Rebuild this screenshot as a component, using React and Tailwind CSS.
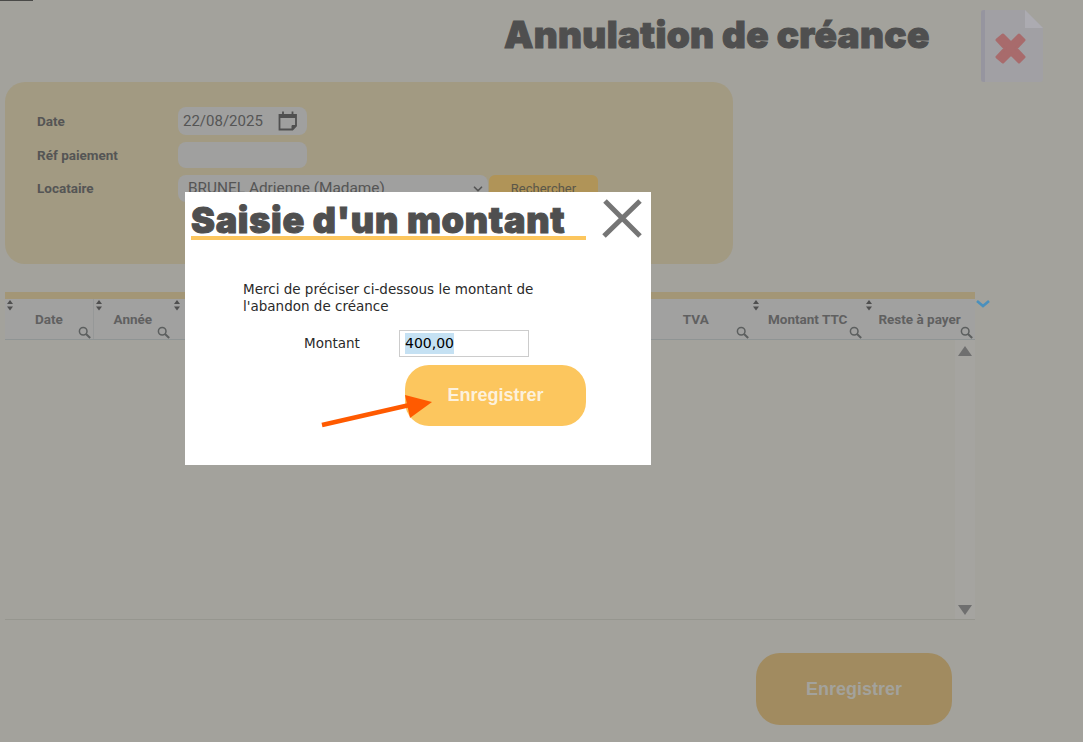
import { ChevronDown } from 'lucide-react';

const SortIcon = ({ className }) => (
  <svg viewBox="0 0 8 11" className={`absolute w-2 h-[11px] ${className}`}>
    <path d="M4 0 7 4H1zM4 10.5 1 6.5h6z" fill="#4f4f4f" />
  </svg>
);

const SearchIcon = ({ className }) => (
  <svg viewBox="0 0 13 13" className={`absolute w-[13px] h-[13px] ${className}`} fill="none" stroke="#5c5f5f">
    <circle cx="5.200" cy="5.200" r="3.800" strokeWidth="1.500" />
    <path d="M8 8 12.200 12" strokeWidth="2" />
  </svg>
);

const CalendarIcon = () => (
  <svg viewBox="0 0 20 20" className="w-5 h-5 ml-[15px]" fill="none" stroke="#505050">
    <path d="M1.500 4h16.500v11l-3.500 3.500H1.500z" strokeWidth="1.800" />
    <path d="M1.500 5.500h16.500" strokeWidth="3" />
    <path d="M5 .5v4M14.500 .5v4" strokeWidth="1.800" />
    <path d="M18 14.500h-4v4z" fill="#505050" strokeWidth="1" />
  </svg>
);

const FileCloseIcon = () => (
  <svg viewBox="0 0 62 72" className="w-[62px] h-[72px]">
    <path d="M3 0h41l18 18v51a3 3 0 0 1-3 3H3a3 3 0 0 1-3-3V3a3 3 0 0 1 3-3z" fill="#a1a0a4" />
    <path d="M3 0h1v72H3a3 3 0 0 1-3-3V3a3 3 0 0 1 3-3z" fill="#96959f" />
    <path d="M44 0l18 18H44z" fill="#acabb1" />
    <path d="M22 25l8 8 8-8 5 5-8 8.500 8 8.500-5 5-8-8-8 8-6-5 8-8.500-8-8.500z" fill="#a86b6c" stroke="#a86b6c" strokeWidth="3" strokeLinejoin="round" />
  </svg>
);

const columns = [
  { label: 'Date', width: 'w-[89px]', sort: true, border: true },
  { label: 'Année', width: 'w-[78px]', sort: true },
  { label: '', width: 'w-[469px]', sort: true },
  { label: 'TVA', width: 'w-[111px]' },
  { label: 'Montant TTC', width: 'w-[113px]', sort: true },
  { label: 'Reste à payer', width: 'w-[111px]', sort: true },
];

const roboto = "font-['Roboto',sans-serif]";

export default function App() {
  return (
    <div className="relative w-[1083px] h-[742px] overflow-hidden bg-[#a3a29c] flex flex-col">
      <div className="w-[33px] h-px shrink-0 bg-[#4a4a48]" />

      <header className="h-[81px] shrink-0 flex items-start">
        <h1 className="ml-[504px] mt-[12px] w-[430px] font-['Inter',sans-serif] font-black text-[37px] leading-[44px] tracking-[0.3px] [-webkit-text-stroke:1px_#4f4f4f] text-[#4f4f4f] whitespace-nowrap">
          Annulation de créance
        </h1>
        <div className="ml-[47px] mt-[9px]">
          <FileCloseIcon />
        </div>
      </header>

      <section className={`ml-[5px] w-[728px] h-[182px] shrink-0 rounded-[20px] bg-[#a29a82] pl-[32px] pt-[25px] flex flex-col gap-[7px] ${roboto} text-[#555555]`}>
        <div className="flex items-center h-[28px]">
          <label className="w-[141px] text-[13.500px] font-bold">Date</label>
          <div className="w-[129px] h-[28px] rounded-lg bg-[#a0a09f] pl-[5px] flex items-center text-[15px]">
            22/08/2025
            <CalendarIcon />
          </div>
        </div>
        <div className="flex items-center h-[26px]">
          <label className="w-[141px] text-[13.500px] font-bold">Réf paiement</label>
          <div className="w-[129px] h-[26px] rounded-lg bg-[#a0a09f]" />
        </div>
        <div className="flex items-center h-[27px]">
          <label className="w-[141px] text-[13.500px] font-bold">Locataire</label>
          <div className="w-[310px] h-[27px] rounded-lg bg-[#a0a09f] pl-[10px] pr-[3px] flex items-center justify-between text-[15.400px]">
            BRUNEL Adrienne (Madame)
            <ChevronDown size={14} strokeWidth={3} />
          </div>
          <button className="ml-px w-[109px] h-[27px] rounded-md bg-[#b09458] text-[13px] text-[#5b5749]">Rechercher</button>
        </div>
      </section>

      <section className={`relative mt-[28px] ml-[5px] w-[970px] shrink-0 ${roboto}`}>
        <div className="h-[7px] bg-[#a39676]" />
        <div className="flex h-[41px] border-b border-[#8f9494] bg-[#a1a1a0]">
          {columns.map((col, i) => (
            <div key={i} className={`relative ${col.width} flex items-center justify-center text-[13.500px] font-bold text-[#606060] ${col.border ? 'border-r border-[#969898]' : ''}`}>
              {col.sort && <SortIcon className="left-px top-px" />}
              <span className="whitespace-nowrap">{col.label}</span>
              <SearchIcon className="right-[2px] bottom-0" />
            </div>
          ))}
        </div>
        <div className="h-[280px] border-b border-[#96968f] flex justify-end">
          <div className="w-[20px] h-full bg-[#a5a4a0] flex flex-col items-center justify-between pt-[6px] pb-[4px]">
            <svg viewBox="0 0 14 10" className="w-[14px] h-[10px]"><path d="M7 0 14 10H0z" fill="#6f6f6f" /></svg>
            <svg viewBox="0 0 14 10" className="w-[14px] h-[10px]"><path d="M0 0H14L7 10z" fill="#6f6f6f" /></svg>
          </div>
        </div>
        <svg viewBox="0 0 14 8" className="absolute -right-[15px] top-[8px] w-[14px] h-2" fill="none" stroke="#4a90bd" strokeWidth="2.600">
          <path d="M1 1l6 5 6-5" />
        </svg>
      </section>

      <div className="mt-[33px] ml-[756px] w-[196px] h-[72px] shrink-0 rounded-[24px] bg-[#a18b60] flex items-center justify-center font-['Liberation_Sans',sans-serif] font-bold text-[18px] text-[#a3a29c]">
        Enregistrer
      </div>

      {/* modal over the dimmed page */}
      <div className="absolute left-[185px] top-[192px] w-[466px] h-[273px] bg-white">
        <div className="flex items-start pl-[6px]">
          <h2 className="w-[395px] h-[48px] border-b-4 border-[#fcc65e] font-['Inter',sans-serif] font-black text-[36px] leading-[56px] tracking-[0.7px] [-webkit-text-stroke:1px_#4f4f4f] text-[#4f4f4f] whitespace-nowrap">
            Saisie d'un montant
          </h2>
          <svg viewBox="0 0 40 40" className="w-10 h-10 ml-[16px] mt-[7px]" stroke="#757575" strokeWidth="5">
            <path d="M3 2 38 37M38 2 2 37" />
          </svg>
        </div>

        <div className="ml-[58px] mt-[41px] font-['DejaVu_Sans',sans-serif] text-[13.500px] text-[#2a2a2a]">
          <p className="w-[310px] leading-[17px]">Merci de préciser ci-dessous le montant de l'abandon de créance</p>
          <div className="flex items-center mt-[15px]">
            <span className="ml-[61px] w-[95px]">Montant</span>
            <div className="w-[130px] h-[27px] border border-[#cccccc] pl-[5px] flex items-center text-[14px] text-black">
              <span className="bg-[#c5e1f3]">400,00</span>
            </div>
          </div>
          <div className="ml-[162px] mt-[8px] w-[181px] h-[61px] rounded-[24px] bg-[#fcc65e] flex items-center justify-center font-['Liberation_Sans',sans-serif] font-bold text-[18px] text-[#fdf1dc]">
            Enregistrer
          </div>
        </div>
      </div>

      <svg viewBox="0 0 120 40" className="absolute left-[318px] top-[390px] w-[120px] h-[40px]">
        <path d="M4 35 96 14" stroke="#ff5a00" strokeWidth="4.500" fill="none" />
        <path d="M87 5 114 12 92 28z" fill="#ff5a00" />
      </svg>
    </div>
  );
}
